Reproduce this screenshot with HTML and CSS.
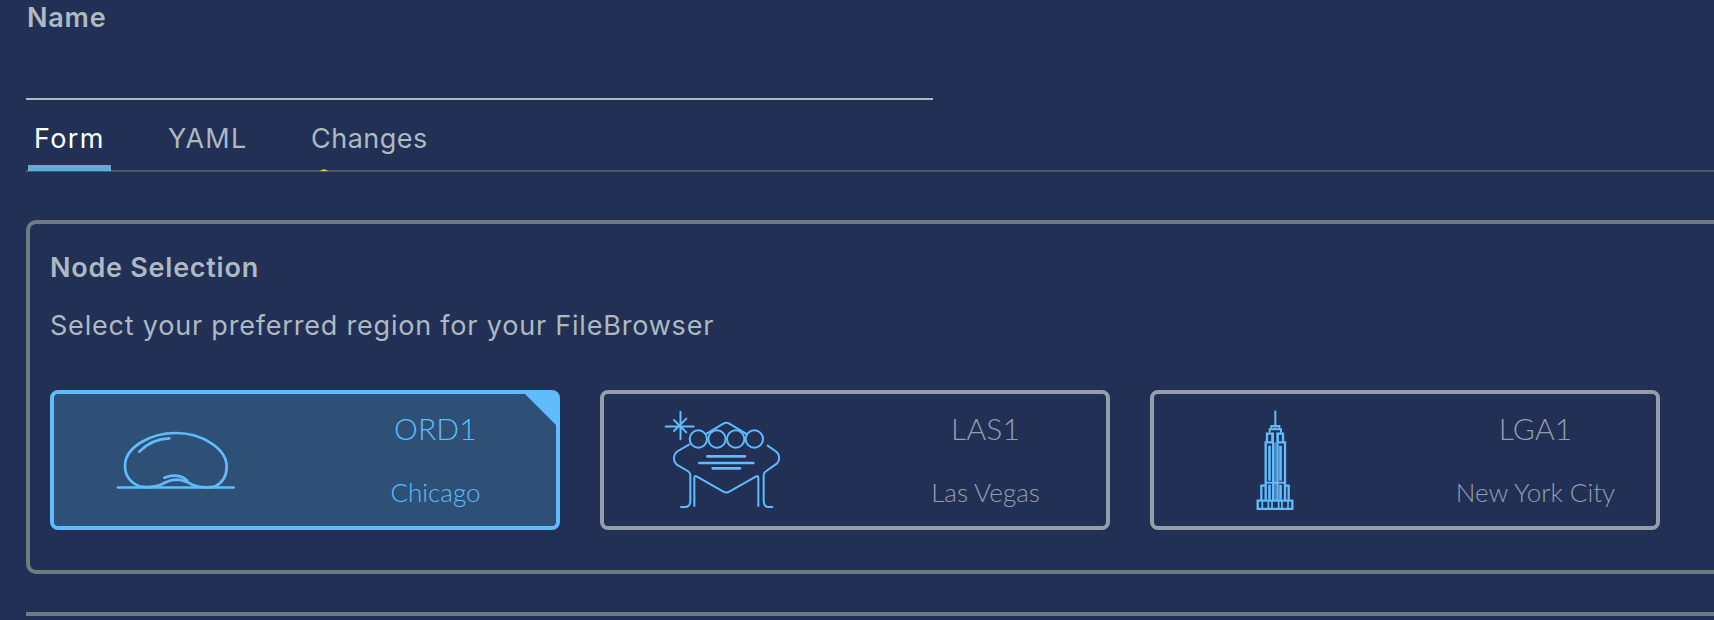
FILE: index.html
```html
<!DOCTYPE html>
<html lang="en">
<head>
<meta charset="utf-8">
<title>FileBrowser</title>
<link rel="stylesheet" href="styles.css">
</head>
<body>
<main class="page">
  <label class="field">
    <span class="field-label">Name</span>
    <input class="field-input" type="text" aria-label="Name">
  </label>
  <nav class="tabs">
    <a class="tab tab-form active">Form</a>
    <a class="tab tab-yaml">YAML</a>
    <a class="tab tab-changes">Changes</a>
    <svg class="tab-dot" viewBox="0 0 8 2"><path d="M0 2Q4-1.6 8 2z" fill="#f5c451"/></svg>
  </nav>
  <section class="panel">
    <h2 class="panel-title">Node Selection</h2>
    <p class="panel-text">Select your preferred region for your FileBrowser</p>
    <div class="cards">
      <div class="card selected">
        <div class="card-art">
          <svg class="bean" viewBox="48 88 360 180">
            <g fill="none" stroke="#60bcfc" stroke-width="8" stroke-linecap="round" stroke-linejoin="round">
              <path d="M54 260.500H401"/>
              <path d="M120 258C91 246 75 226 75 196C75 140 150 97 228 97C306 97 380 144 380 198C380 226 366 247 344 258C325 261 298 261 279 253C263 245 253 238 231 237C204 237 194 248 178 254C159 260 137 260 120 258"/>
              <path d="M118 153C140 130 170 114 208 113"/>
              <path d="M193 231C218 222 242 222 262 240"/>
            </g>
          </svg>
        </div>
        <div class="card-copy"><span class="code">ORD1</span><span class="city">Chicago</span></div>
        <span class="corner"></span>
      </div>
      <div class="card">
        <div class="card-art">
          <svg class="vegas" viewBox="42 30 372 300">
            <g fill="none" stroke="#60bcfc" stroke-width="6" stroke-linecap="round" stroke-linejoin="round">
              <path d="M91.500 35V118M47 79.500H131M72 60L109 97M109 56L72 93"/>
              <circle cx="145" cy="117" r="26"/><circle cx="201" cy="117" r="26"/><circle cx="257" cy="117" r="26"/><circle cx="313" cy="117" r="26"/>
              <path d="M170 101L220 71Q229 65 238 71L288 101"/>
              <path d="M117 134L84 153C68 163 68 186 84 196L113 213Q121 218 121 226V302Q121 321 104 321H93"/>
              <path d="M353 137L376 153C391 163 391 186 376 194L349 213Q341 218 341 226V302Q341 321 356 321H367"/>
              <path d="M133 318V233Q133 225 141 230L220 275Q229 280 238 275L317 230Q325 225 325 233V318"/>
              <path stroke-width="8" d="M172 169H285M148 189H310M188 205H270"/>
            </g>
          </svg>
        </div>
        <div class="card-copy"><span class="code">LAS1</span><span class="city">Las Vegas</span></div>
      </div>
      <div class="card">
        <div class="card-art">
          <svg class="empire" viewBox="78 30 114 300">
            <g fill="none" stroke="#60bcfc" stroke-width="6">
              <path d="M136 32V78"/>
              <path d="M124 90V78H148V90M119 98V88H153V98"/>
              <path d="M129 84H143" stroke-width="5" stroke-opacity=".6"/>
              <path d="M111 127V101H127V127M143 127V101H159V127" stroke-width="7"/>
              <path d="M127 127H107V300M145 127H165V300" stroke-width="7"/>
              <path d="M118.500 137V242M151.500 137V242M118.500 254V299M151.500 254V299" stroke-width="8"/>
              <path d="M129 98V300M143 98V300"/>
              <path d="M136 126V300" stroke-width="10" stroke-opacity=".6"/>
              <path d="M107 248H165"/>
              <path d="M107 257H94V300M165 257H176V300" stroke-width="7"/>
              <path d="M83 302H187V327H83Z" stroke-width="7"/>
              <path d="M97 302V327M115 302V327M126 302V327M146 302V327M156 302V327M174 302V327" stroke-width="5"/>
            </g>
          </svg>
        </div>
        <div class="card-copy"><span class="code">LGA1</span><span class="city">New York City</span></div>
      </div>
    </div>
  </section>
  <div class="divider"></div>
</main>
</body>
</html>
```
FILE: styles.css
```css
* { box-sizing: border-box; }
body {
  margin: 0;
  background: #223055;
  color: #adb9c3;
  font-family: Inter, "Open Sans", sans-serif;
  font-size: 27px;
  line-height: 32px;
}
.page {
  width: 1714px;
  height: 620px;
  overflow: hidden;
  padding-left: 26px;
}
.field { display: block; width: 907px; height: 100px; }
.field-label {
  display: block;
  padding: 2px 0 0 1px;
  font-weight: 600;
  letter-spacing: 0.8px;
}
.field-input {
  display: block;
  width: 100%;
  height: 66px;
  padding: 0;
  border: 0;
  border-bottom: 2px solid #adb9c3;
  background: transparent;
  outline: none;
}
.tabs {
  position: relative;
  display: flex;
  height: 72px;
  padding: 23px 0 0 2px;
  border-bottom: 2px solid #4b5b66;
}
.tab { height: 48px; }
.tab-form { width: 83px; padding-left: 6px; letter-spacing: 1.4px; }
.tab-yaml { margin-left: 57px; width: 120px; letter-spacing: 1.2px; }
.tab-changes { margin-left: 23px; letter-spacing: 0.5px; }
.active { color: #fff; border-bottom: 6px solid #66abd8; z-index: 1; }
.tab-dot { position: absolute; left: 294px; bottom: -1px; width: 8px; height: 2px; }
.panel {
  width: 1720px;
  height: 354px;
  margin-top: 48px;
  padding: 28px 20px 0;
  border: 4px solid #6e7b80;
  border-radius: 10px;
}
.panel-title {
  margin: 0;
  font-size: 27px;
  font-weight: 600;
  line-height: 32px;
  letter-spacing: 0.75px;
}
.panel-text { margin: 26px 0 0; letter-spacing: 0.8px; white-space: nowrap; }
.cards { display: flex; gap: 40px; margin-top: 48px; }
.card {
  position: relative;
  display: grid;
  grid-template-columns: 244px 241px;
  column-gap: 17px;
  width: 510px;
  height: 140px;
  border: 4px solid #959eaf;
  border-radius: 8px;
  color: #959eaf;
  font-family: Lato, sans-serif;
  font-weight: 300;
}
.selected { border-color: #60bcfc; background: #2e5077; color: #60bcfc; }
.card-art { display: flex; justify-content: center; align-items: flex-start; }
.bean { width: 120px; height: 60px; margin-top: 35.5px; }
.vegas { width: 124px; height: 100px; margin-top: 16px; }
.empire { width: 38px; height: 100px; margin: 16px 2px 0 0; }
.card-copy { display: flex; flex-direction: column; align-items: center; padding-top: 16px; }
.code { font-size: 30px; line-height: 36px; letter-spacing: 0.15px; }
.city { margin-top: 31px; font-size: 26px; line-height: 31px; }
.corner {
  position: absolute;
  top: 0;
  right: 0;
  width: 31px;
  height: 31px;
  background: #60bcfc;
  clip-path: polygon(0 0, 100% 0, 100% 100%);
}
.divider { height: 4px; margin-top: 38px; background: #6e7b80; }
```
